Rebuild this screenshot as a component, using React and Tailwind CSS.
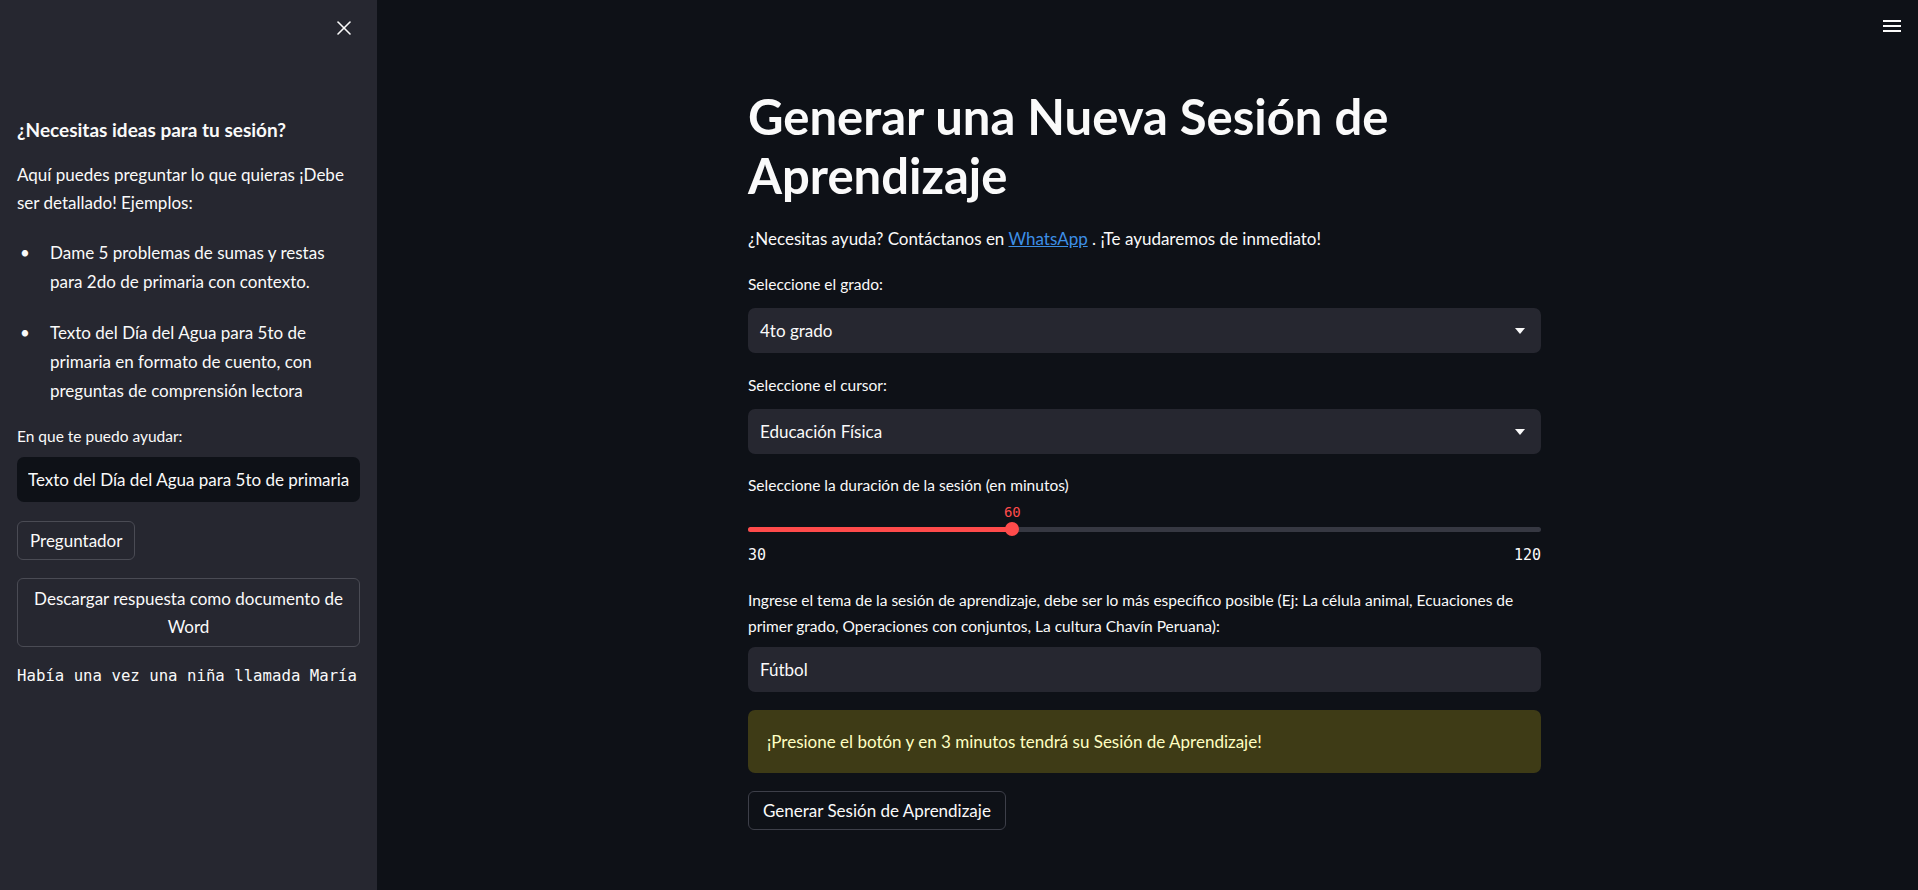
import React, { useState } from 'react';
import { X } from 'lucide-react';

const SANS = { fontFamily: 'Lato, "Noto Sans", sans-serif' };

const Caret = () => (
    <svg width="10" height="6" viewBox="0 0 10 6" className="fill-[#fafafa]">
        <path d="M0 0h10L5 6z" />
    </svg>
);

const SelectBox = ({ value }) => (
    <div className="mt-[14px] flex h-[45px] items-center justify-between rounded-[7px] bg-[#262730] pl-[12px] pr-[16px] text-[17px]">
        <span>{value}</span>
        <Caret />
    </div>
);

const Sidebar = () => {
    const [question, setQuestion] = useState('Texto del Día del Agua para 5to de primaria');

    return (
        <aside className="w-[377px] shrink-0 bg-[#262730] px-[17px]">
            <div className="flex h-[56px] items-center justify-end pr-[4px]">
                <X size={24} strokeWidth={1.6} className="text-[#fafafa]" />
            </div>

            <p className="mt-[60px] text-[19px] font-bold leading-[28px]">¿Necesitas ideas para tu sesión?</p>
            <p className="mt-[17px] text-[17px] leading-[28px]">
                Aquí puedes preguntar lo que quieras ¡Debe ser detallado! Ejemplos:
            </p>

            <ul className="mt-[21px] space-y-[22px] text-[17px] leading-[29px]">
                <li className="flex">
                    <span className="w-[33px] shrink-0 pl-[3px]">•</span>
                    <span>Dame 5 problemas de sumas y restas para 2do de primaria con contexto.</span>
                </li>
                <li className="flex">
                    <span className="w-[33px] shrink-0 pl-[3px]">•</span>
                    <span>Texto del Día del Agua para 5to de primaria en formato de cuento, con preguntas de comprensión lectora</span>
                </li>
            </ul>

            <p className="mt-[21px] text-[15.5px] leading-[20px]">En que te puedo ayudar:</p>
            <input
                value={question}
                onChange={(e) => setQuestion(e.target.value)}
                className="mt-[11px] h-[45px] w-full rounded-[7px] bg-[#0e1117] px-[11px] text-[17px] text-[#fafafa] outline-none"
                style={SANS}
            />

            <button className="mt-[19px] h-[39px] rounded-[6px] border border-[#4a4b54] px-[12px] text-[17px]" style={SANS}>
                Preguntador
            </button>
            <button className="mt-[18px] h-[69px] w-full rounded-[6px] border border-[#4a4b54] px-[12px] text-[17px] leading-[28px]" style={SANS}>
                Descargar respuesta como documento de Word
            </button>

            <p className="mt-[19px] text-[15.7px] leading-[20px]" style={{ fontFamily: '"DejaVu Sans Mono", monospace' }}>
                Había una vez una niña llamada María
            </p>
        </aside>
    );
};

const App = () => {
    const [topic, setTopic] = useState('Fútbol');
    const duration = 60;
    const pct = ((duration - 30) / 90) * 100;

    return (
        <div className="flex h-[890px] w-full overflow-hidden bg-[#0e1117] text-[#fafafa]" style={SANS}>
            <Sidebar />

            <main className="relative flex-1">
                {/* hamburger */}
                <div className="absolute right-[17px] top-[20px] flex w-[18px] flex-col gap-[3px]">
                    <span className="h-[2px] bg-[#fafafa]" />
                    <span className="h-[2px] bg-[#fafafa]" />
                    <span className="h-[2px] bg-[#fafafa]" />
                </div>

                <div className="ml-[371px] w-[793px] pt-[87px]">
                    <h1 className="text-[49px] font-bold leading-[59px]">
                        Generar una Nueva Sesión de Aprendizaje
                    </h1>

                    <p className="mt-[20px] text-[17px] leading-[28px]">
                        ¿Necesitas ayuda? Contáctanos en{' '}
                        <a href="#" className="text-[#3d8fe6] underline">WhatsApp</a>
                        {' '}. ¡Te ayudaremos de inmediato!
                    </p>

                    <p className="mt-[21px] text-[15.5px] leading-[20px]">Seleccione el grado:</p>
                    <SelectBox value="4to grado" />

                    <p className="mt-[22px] text-[15.5px] leading-[20px]">Seleccione el cursor:</p>
                    <SelectBox value="Educación Física" />

                    <p className="mt-[21px] text-[15.5px] leading-[20px]">Seleccione la duración de la sesión (en minutos)</p>

                    {/* slider */}
                    <div style={{ fontFamily: '"DejaVu Sans Mono", monospace' }}>
                        <div className="relative mt-[8px] h-[18px]">
                            <span
                                className="absolute top-0 -translate-x-1/2 text-[14px] leading-[18px] text-[#ff4b4b]"
                                style={{ left: `${pct}%` }}
                            >
                                {duration}
                            </span>
                        </div>
                        <div className="relative flex h-[16px] items-center">
                            <div className="h-[5px] w-full rounded-full bg-[#363842]">
                                <div className="h-full rounded-full bg-[#ff4b4b]" style={{ width: `${pct}%` }} />
                            </div>
                            <div
                                className="absolute top-[1px] h-[14px] w-[14px] -translate-x-1/2 rounded-full bg-[#ff4b4b]"
                                style={{ left: `${pct}%` }}
                            />
                        </div>
                        <div className="mt-[8px] flex h-[20px] items-center justify-between text-[15px]">
                            <span>30</span>
                            <span>120</span>
                        </div>
                    </div>

                    <p className="mt-[22px] text-[15.5px] leading-[26px]">
                        Ingrese el tema de la sesión de aprendizaje, debe ser lo más específico posible (Ej: La célula animal, Ecuaciones de primer grado, Operaciones con conjuntos, La cultura Chavín Peruana):
                    </p>
                    <input
                        value={topic}
                        onChange={(e) => setTopic(e.target.value)}
                        className="mt-[8px] h-[45px] w-full rounded-[7px] bg-[#262730] px-[12px] text-[17px] text-[#fafafa] outline-none"
                        style={SANS}
                    />

                    <div className="mt-[18px] flex h-[63px] items-center rounded-[7px] bg-[#3e3b16] px-[19px] text-[17px] text-[#ffffc2]">
                        ¡Presione el botón y en 3 minutos tendrá su Sesión de Aprendizaje!
                    </div>

                    <button className="mt-[18px] h-[39px] rounded-[6px] border border-[#3d3f49] bg-[#0e1117] px-[14px] text-[17px]" style={SANS}>
                        Generar Sesión de Aprendizaje
                    </button>
                </div>
            </main>
        </div>
    );
};

export default App;
